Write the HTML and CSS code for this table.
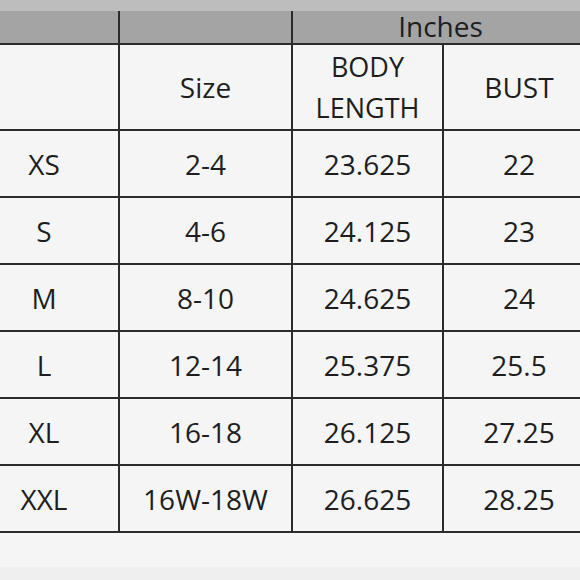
FILE: index.html
```html
<!DOCTYPE html>
<html lang="en">
<head>
<meta charset="utf-8">
<title>Size Chart</title>
<link rel="stylesheet" href="styles.css">
</head>
<body>
<div class="page">
  <div class="top-strip"></div>
  <table class="chart">
    <colgroup>
      <col class="c1"><col class="c2"><col class="c3"><col class="c4">
    </colgroup>
    <thead>
      <tr class="band">
        <th></th>
        <th></th>
        <th colspan="2" class="unit">Inches</th>
      </tr>
      <tr class="head">
        <th></th>
        <th>Size</th>
        <th class="two">BODY<br>LENGTH</th>
        <th>BUST</th>
      </tr>
    </thead>
    <tbody>
      <tr><td>XS</td><td>2-4</td><td>23.625</td><td>22</td></tr>
      <tr><td>S</td><td>4-6</td><td>24.125</td><td>23</td></tr>
      <tr><td>M</td><td>8-10</td><td>24.625</td><td>24</td></tr>
      <tr><td>L</td><td>12-14</td><td>25.375</td><td>25.5</td></tr>
      <tr><td>XL</td><td>16-18</td><td>26.125</td><td>27.25</td></tr>
      <tr><td>XXL</td><td>16W-18W</td><td>26.625</td><td>28.25</td></tr>
    </tbody>
  </table>
  <div class="bottom-fill"></div>
</div>
</body>
</html>
```
FILE: styles.css
```css
html, body {
  margin: 0;
  padding: 0;
  background: #efefef;
}
body {
  width: 580px;
  height: 580px;
  overflow: hidden;
  font-family: "Open Sans", "Noto Sans", sans-serif;
  color: #1e1e1e;
}
.page {
  display: flex;
  flex-direction: column;
  width: 580px;
  height: 567px;
  background: #f5f5f5;
}
.top-strip {
  height: 11px;
  flex: none;
  background: #bdbdbd;
}
.chart {
  flex: none;
  margin-left: -32px;
  width: 626px;
  border-collapse: collapse;
  table-layout: fixed;
  font-size: 28px;
  font-weight: 400;
}
.c1 { width: 150px; }
.c2 { width: 173px; }
.c3 { width: 151px; }
.c4 { width: 152px; }
.chart th, .chart td {
  border: 2px solid #2b2b2b;
  padding: 0;
  text-align: center;
  vertical-align: middle;
  font-weight: 400;
  background: #f5f5f5;
}
.band th {
  background: #a4a4a4;
  border-top: none;
  height: 32px;
}
.band .unit {
  color: #1e1e1e;
  line-height: 30px;
  vertical-align: top;
  padding-right: 6px;
}
.head th {
  height: 84px;
}
.head .two {
  line-height: 41px;
  font-size: 27px;
}
.chart tbody td {
  height: 65px;
}
.bottom-fill {
  flex: 1;
}
```
